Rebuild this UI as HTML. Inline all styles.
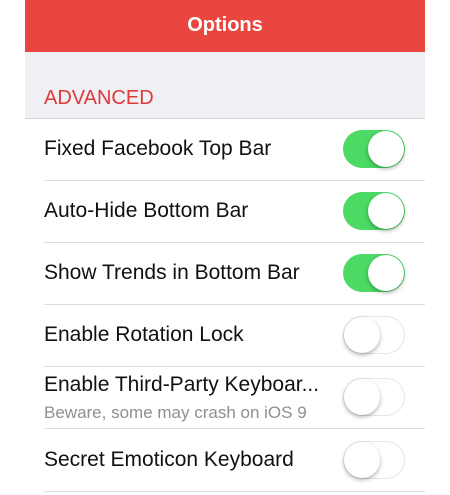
<html><head><style>
body{margin:0;width:450px;height:495px;background:#fff;font-family:"Liberation Sans",sans-serif;position:relative;overflow:hidden}
.hdr{position:absolute;left:25px;top:0;width:400px;height:52px;background:#e8463f;color:#fff;font-size:20px;font-weight:bold;text-align:center;line-height:50px}
.gray{position:absolute;left:25px;top:52px;width:400px;height:66px;background:#efeff4;border-bottom:1px solid #d8d8dc}
.sec{position:absolute;left:44px;top:87px;color:#e0393a;font-size:20px}
.row{position:absolute;left:44px;width:381px;height:62px;border-bottom:1px solid #ddd}
.t{position:absolute;left:0;top:19px;font-size:21px;color:#111;white-space:nowrap}
.s{position:absolute;left:0;top:37px;font-size:17px;color:#8e8e93;white-space:nowrap}
.tg{position:absolute;left:299px;top:12px;width:62px;height:38px;border-radius:19px;box-sizing:border-box}
.on{background:#4cd964}
.off{background:#fff;border:1.5px solid #e5e5e5}
.k{position:absolute;top:1px;width:36px;height:36px;border-radius:50%;background:#fff;box-shadow:0 2px 4px rgba(0,0,0,.3)}
.on .k{right:1px}.off .k{left:0;top:0}
</style></head><body>
<div class="hdr">Options</div>
<div class="gray"></div>
<div class="sec">ADVANCED</div>
<div class="row" style="top:118px"><div class="t">Fixed Facebook Top Bar</div><div class="tg on"><div class="k"></div></div></div>
<div class="row" style="top:180px"><div class="t">Auto-Hide Bottom Bar</div><div class="tg on"><div class="k"></div></div></div>
<div class="row" style="top:242px"><div class="t">Show Trends in Bottom Bar</div><div class="tg on"><div class="k"></div></div></div>
<div class="row" style="top:304px"><div class="t">Enable Rotation Lock</div><div class="tg off"><div class="k"></div></div></div>
<div class="row" style="top:366px"><div class="t" style="top:7px">Enable Third-Party Keyboar...</div><div class="s">Beware, some may crash on iOS 9</div><div class="tg off"><div class="k"></div></div></div>
<div class="row" style="top:429px"><div class="t">Secret Emoticon Keyboard</div><div class="tg off"><div class="k"></div></div></div>
</body></html>
